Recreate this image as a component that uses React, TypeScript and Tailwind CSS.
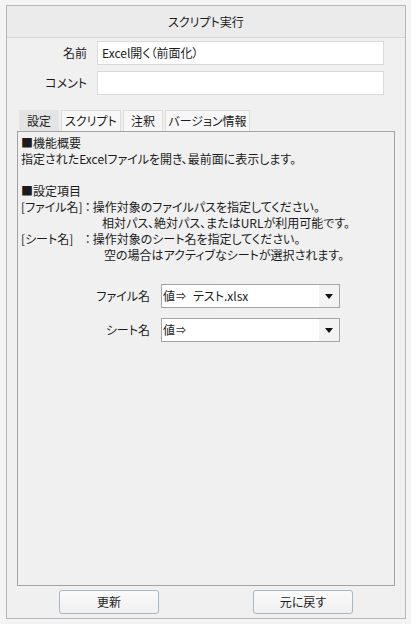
import React from "react";

const font = "[font-family:'Noto_Sans_CJK_JP','Noto_Sans',sans-serif] [font-feature-settings:'palt']";

const tabs = [
  { label: "設定", w: "w-[40px]", active: true },
  { label: "スクリプト", w: "w-[60px]" },
  { label: "注釈", w: "w-[40px]" },
  { label: "バージョン情報", w: "w-[85px]" },
];

function Arrow() {
  return (
    <svg width="8" height="5" viewBox="0 0 8 5">
      <path d="M0 0 L8 0 L4 5 Z" fill="#111" />
    </svg>
  );
}

function Combo({ value }: { value?: string }) {
  return (
    <div className="flex h-[24px] w-[179px] border border-[#a5a5a5] bg-white">
      <div className="flex flex-1 items-center pl-[1px]">
        <span>値</span>
        <span className="ml-[1px] text-[10px] text-[#333]">⇒</span>
        {value && <span className="ml-[7px]">{value}</span>}
      </div>
      <div className="flex w-[20px] items-center justify-center bg-[#f3f3f3]">
        <Arrow />
      </div>
    </div>
  );
}

export default function App() {
  return (
    <div className={`h-[624px] w-[411px] bg-[#f4f4f4] pl-[6px] pt-[5px] text-[12px] text-[#1b1b1b] ${font}`}>
      <div className="flex h-[614px] w-[400px] flex-col border border-[#b8b8b8] bg-[#f0f0f0]">
        <div className="flex h-[32px] items-center justify-center border-b border-[#d6d6d6] bg-[#ebebeb]">
          スクリプト実行
        </div>

        <div className="pt-[3px]">
          <div className="flex items-center">
            <span className="w-[80px] text-right">名前</span>
            <div className="ml-[10px] flex h-[24px] w-[287px] items-center border border-[#dadada] bg-white px-[4px]">
              Excel開く（前面化）
            </div>
          </div>
          <div className="mt-[6px] flex items-center">
            <span className="w-[80px] text-right">コメント</span>
            <div className="ml-[10px] h-[24px] w-[287px] border border-[#dadada] bg-white" />
          </div>
        </div>

        <div className="ml-[12px] mt-[15px] flex h-[21px] gap-[2px]">
          {tabs.map((t) => (
            <div
              key={t.label}
              className={`${t.w} flex items-center justify-center border border-b-0 ${
                t.active ? "border-[#e4e4e4] bg-[#e4e4e4]" : "border-[#dcdcdc] bg-[#f7f7f7]"
              }`}
            >
              {t.label}
            </div>
          ))}
        </div>

        <div className="mx-[10px] flex-1 border border-[#a3a3a3] bg-[#f0f0f0] pl-[3px] pt-[3px] leading-[16px]">
          <div>■機能概要</div>
          <div>指定されたExcelファイルを開き、最前面に表示します。</div>
          <div className="h-[16px]" />
          <div>■設定項目</div>
          <div className="grid grid-cols-[auto_auto_1fr] whitespace-nowrap">
            <span>[ファイル名]</span>
            <span className="px-[2px]">：</span>
            <span>操作対象のファイルパスを指定してください。</span>
            <span className="col-span-3 pl-[81px]">相対パス、絶対パス、またはURLが利用可能です。</span>
            <span>[シート名]</span>
            <span className="px-[2px]">：</span>
            <span>操作対象のシート名を指定してください。</span>
            <span className="col-span-3 pl-[83px]">空の場合はアクティブなシートが選択されます。</span>
          </div>

          <div className="mt-[21px] flex items-center">
            <span className="w-[129px] text-right">ファイル名</span>
            <div className="ml-[11px]">
              <Combo value="テスト.xlsx" />
            </div>
          </div>
          <div className="mt-[10px] flex items-center">
            <span className="w-[129px] text-right">シート名</span>
            <div className="ml-[11px]">
              <Combo />
            </div>
          </div>
        </div>

        <div className="flex gap-[94px] py-[4px] pl-[52px]">
          <button className="h-[24px] w-[100px] rounded-[3px] border border-[#a7b6c9] bg-gradient-to-b from-[#fafafa] to-[#f0f0f0]">
            更新
          </button>
          <button className="h-[24px] w-[100px] rounded-[3px] border border-[#a7b6c9] bg-gradient-to-b from-[#fafafa] to-[#f0f0f0]">
            元に戻す
          </button>
        </div>
      </div>
    </div>
  );
}
